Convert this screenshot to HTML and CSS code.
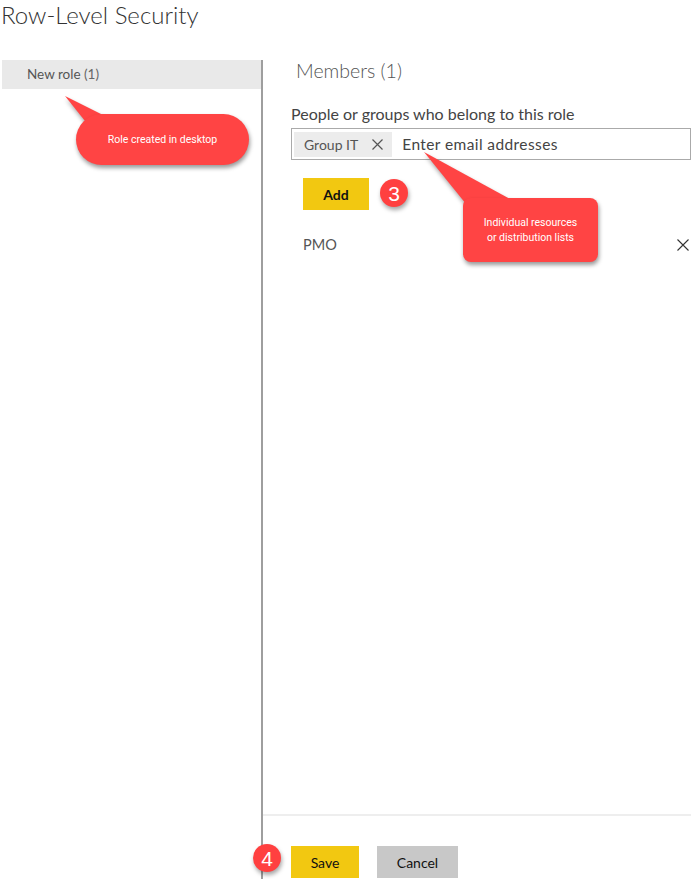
FILE: index.html
```html
<!DOCTYPE html>
<html lang="en">
  <head>
    <meta charset="UTF-8" />
    <meta name="viewport" content="width=device-width, initial-scale=1.0" />
    <title>Row-Level Security</title>
    <link rel="stylesheet" href="styles.css">
  </head>
  <body>
    <h1 class="page-title">Row-Level Security</h1>

    <div class="rls">
      <div class="roles">
        <div class="role-item">New role <span class="count">(1)</span></div>
      </div>

      <div class="members">
        <div class="members-body">
          <h2 class="members-title">Members (1)</h2>
          <label class="field-label">People or groups who belong to this role</label>
          <div class="picker">
            <span class="chip">Group IT
              <svg class="chip-x" width="11" height="11" viewBox="0 0 11 11">
                <path d="M0.5 0.5 L10.5 10.5 M10.5 0.5 L0.5 10.5" stroke="#555" stroke-width="1.2" fill="none" />
              </svg>
            </span>
            <input class="picker-input" type="text" placeholder="Enter email addresses" />
          </div>
          <button class="btn btn-yellow btn-add">Add</button>
          <div class="member-row">
            <span>PMO</span>
            <svg class="remove" width="12" height="12" viewBox="0 0 12 12">
              <path d="M0.5 0.5 L11.5 11.5 M11.5 0.5 L0.5 11.5" stroke="#333" stroke-width="1.1" fill="none" />
            </svg>
          </div>
        </div>
        <div class="footer">
          <button class="btn btn-yellow">Save</button>
          <button class="btn btn-grey">Cancel</button>
        </div>
      </div>
    </div>

    <!-- annotations -->
    <div class="callout callout-role">
      <svg class="tail" width="80" height="60" viewBox="0 0 80 60">
        <polygon points="0,0 60,30 40,50" fill="#ff4444" />
      </svg>
      <div class="bubble pill">Role created in desktop</div>
    </div>

    <div class="callout callout-members">
      <svg class="tail" width="120" height="70" viewBox="0 0 120 70">
        <polygon points="0,0 95,52 55,68" fill="#ff4444" />
      </svg>
      <div class="bubble box">Individual resources<br />or distribution lists</div>
    </div>

    <div class="badge badge-3">3</div>
    <div class="badge badge-4">4</div>
  </body>
</html>
```

FILE: styles.css
```css
body {
  margin: 0;
  font-family: "Lato", "Open Sans", sans-serif;
  background: #fff;
  color: #444;
  width: 691px;
  height: 879px;
  overflow: hidden;
  position: relative;
}

.page-title {
  margin: 0;
  padding: 0 0 0 1px;
  height: 60px;
  font-size: 24px;
  font-weight: 300;
  line-height: 30px;
  color: #333;
}

.rls {
  display: flex;
  height: 819px;
}

.roles {
  width: 259px;
  padding-left: 2px;
  border-right: 2px solid #9e9e9e;
}

.role-item {
  height: 29px;
  line-height: 29px;
  background: #e9e9e9;
  padding-left: 25px;
  font-size: 13.5px;
  color: #555;
}

.role-item .count {
  color: #666;
}

.members {
  flex: 1;
  display: flex;
  flex-direction: column;
}

.members-body {
  flex: 1;
  padding-left: 28px;
}

.members-title {
  margin: 0 0 0 5px;
  font-size: 19.5px;
  font-weight: 300;
  line-height: 22px;
  color: #555;
}

.field-label {
  display: block;
  margin-top: 22px;
  font-size: 16px;
  line-height: 20px;
  color: #444;
}

.picker {
  display: flex;
  align-items: center;
  margin-top: 4px;
  height: 30px;
  border: 1px solid #aaa;
  padding-left: 2px;
}

.chip {
  display: flex;
  align-items: center;
  height: 25px;
  padding: 0 9px 0 10px;
  background: #ececec;
  font-size: 14px;
  color: #555;
}

.chip-x {
  margin-left: 14px;
}

.picker-input {
  border: none;
  outline: none;
  margin-left: 8px;
  font-family: inherit;
  font-size: 15.5px;
  letter-spacing: 0.4px;
  color: #444;
  flex: 1;
}

.picker-input::placeholder {
  color: #444;
}

.btn {
  border: none;
  height: 32px;
  font-family: inherit;
  font-size: 14px;
  color: #111;
  padding: 0;
}

.btn-yellow {
  background: #f2c811;
}

.btn-grey {
  background: #c8c8c8;
}

.btn-add {
  display: block;
  margin: 18px 0 0 12px;
  width: 66px;
  font-weight: bold;
}

.member-row {
  display: flex;
  justify-content: space-between;
  align-items: center;
  margin: 26px 0 0 12px;
  padding-right: 2px;
  font-size: 14.5px;
  color: #555;
}

.footer {
  height: 62px;
  border-top: 2px solid #eeeeee;
  display: flex;
  align-items: flex-end;
  gap: 18px;
  padding: 0 0 1px 28px;
}

.footer .btn-yellow {
  width: 68px;
}

.footer .btn-grey {
  width: 81px;
}

/* annotations on top */
.callout {
  position: absolute;
}

.callout .tail {
  position: absolute;
  left: 0;
  top: 0;
  filter: drop-shadow(1px 3px 2px rgba(0, 0, 0, 0.35));
}

.bubble {
  position: absolute;
  background: #ff4444;
  color: #fff;
  font-family: "Roboto", sans-serif;
  font-size: 10.5px;
  text-align: center;
  box-shadow: 1px 3px 4px rgba(0, 0, 0, 0.4);
}

.callout-role {
  left: 65px;
  top: 96px;
}

.callout-role .bubble {
  left: 11px;
  top: 18px;
  width: 173px;
  height: 51px;
  line-height: 51px;
  border-radius: 26px;
}

.callout-members {
  left: 424px;
  top: 152px;
}

.callout-members .bubble {
  left: 39px;
  top: 46px;
  width: 135px;
  height: 64px;
  border-radius: 8px;
  display: flex;
  align-items: center;
  justify-content: center;
  line-height: 15px;
}

.badge {
  position: absolute;
  width: 28px;
  height: 28px;
  border-radius: 50%;
  background: #ff4040;
  color: #fff;
  font-family: "Liberation Sans", sans-serif;
  font-size: 21px;
  line-height: 29px;
  text-align: center;
  box-shadow: 1px 3px 4px rgba(0, 0, 0, 0.35);
}

.badge-3 {
  left: 380px;
  top: 179px;
}

.badge-4 {
  left: 253px;
  top: 844px;
}
```
